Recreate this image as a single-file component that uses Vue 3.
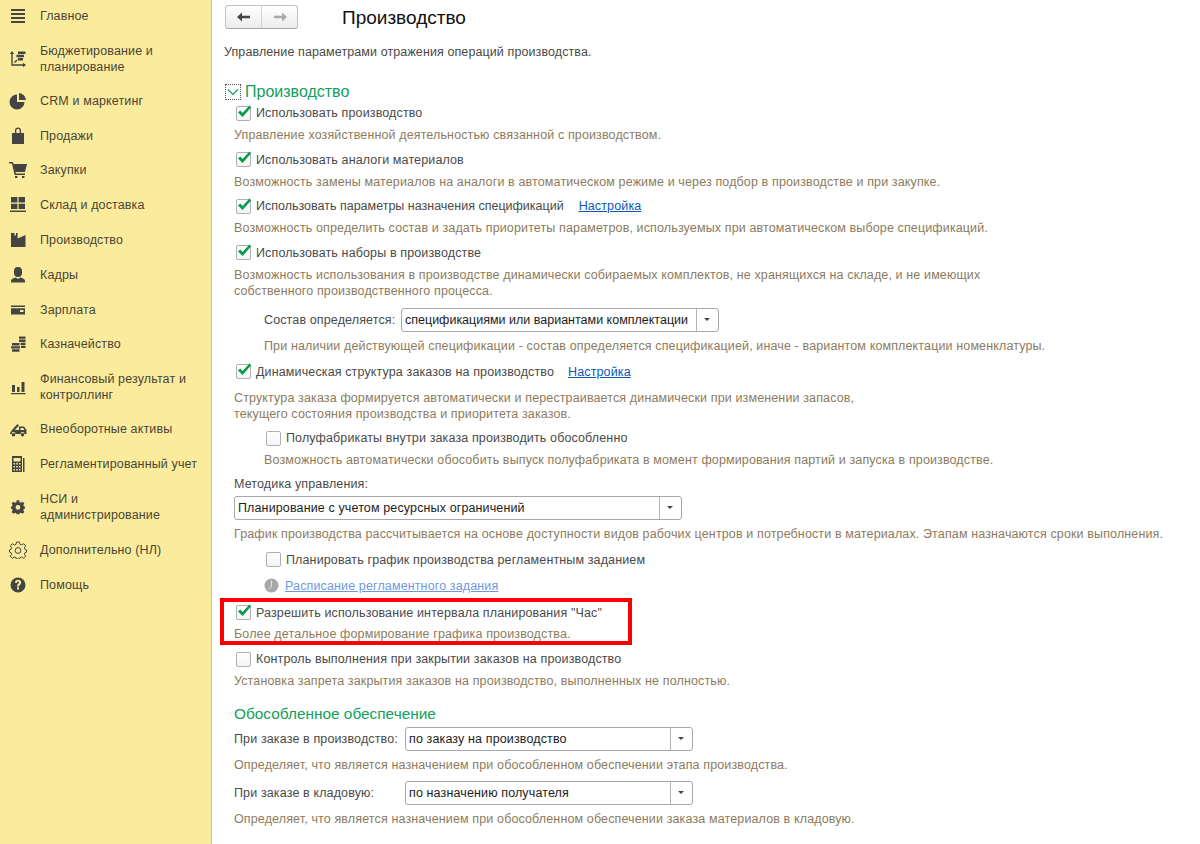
<template>
  <div class="page">
    <aside class="sidebar">
      <div class="nav-item" v-for="item in navItems" :key="item.title" :class="{ tall: item.tall }">
        <svg class="nav-icon" viewBox="0 0 18 18">
          <path :d="item.icon" :class="item.outline ? 'outline' : 'solid'" :transform="item.transform" />
        </svg>
        <span class="nav-title">{{ item.title }}</span>
      </div>
    </aside>

    <main class="content">
      <div class="header">
        <div class="nav-buttons">
          <button class="nav-btn">
            <svg width="16" height="12" viewBox="0 0 16 12"><path d="M1 6 6 1.5V4.8H14V7.2H6V10.5Z" fill="#444" /></svg>
          </button>
          <button class="nav-btn">
            <svg width="16" height="12" viewBox="0 0 16 12"><path d="M15 6 10 1.5V4.8H2V7.2H10V10.5Z" fill="#aaa" /></svg>
          </button>
        </div>
        <h1 class="title">Производство</h1>
      </div>

      <p class="lead">Управление параметрами отражения операций производства.</p>

      <div class="group-head">
        <span class="collapse">
          <svg width="12" height="8" viewBox="0 0 12 8"><path d="M1 1.5 6 6.5 11 1.5" fill="none" stroke="#1c9a5c" stroke-width="1.2" /></svg>
        </span>
        <span class="group-title">Производство</span>
      </div>

      <div class="body">
        <div class="opt">
          <div class="check-row">
            <span class="box"><svg v-bind="checkSvg"><path :d="checkPath" /></svg></span>
            <span>Использовать производство</span>
          </div>
          <div class="hint">Управление хозяйственной деятельностью связанной с производством.</div>
        </div>

        <div class="opt">
          <div class="check-row">
            <span class="box"><svg v-bind="checkSvg"><path :d="checkPath" /></svg></span>
            <span>Использовать аналоги материалов</span>
          </div>
          <div class="hint">Возможность замены материалов на аналоги в автоматическом режиме и через подбор в производстве и при закупке.</div>
        </div>

        <div class="opt">
          <div class="check-row">
            <span class="box"><svg v-bind="checkSvg"><path :d="checkPath" /></svg></span>
            <span class="tight">Использовать параметры назначения спецификаций</span>
            <a class="link">Настройка</a>
          </div>
          <div class="hint">Возможность определить состав и задать приоритеты параметров, используемых при автоматическом выборе спецификаций.</div>
        </div>

        <div class="opt">
          <div class="check-row">
            <span class="box"><svg v-bind="checkSvg"><path :d="checkPath" /></svg></span>
            <span>Использовать наборы в производстве</span>
          </div>
          <div class="hint">Возможность использования в производстве динамически собираемых комплектов, не хранящихся на складе, и не имеющих<br>собственного производственного процесса.</div>
        </div>

        <div class="opt nested compose">
          <div class="field-row">
            <label class="field-label compose-label">Состав определяется:</label>
            <div class="select compose-select">
              <span class="select-value tight">спецификациями или вариантами комплектации</span>
              <span class="select-btn"></span>
            </div>
          </div>
          <div class="hint field-hint">При наличии действующей спецификации - состав определяется спецификацией, иначе - вариантом комплектации номенклатуры.</div>
        </div>

        <div class="opt">
          <div class="check-row">
            <span class="box"><svg v-bind="checkSvg"><path :d="checkPath" /></svg></span>
            <span>Динамическая структура заказов на производство</span>
            <a class="link">Настройка</a>
          </div>
          <div class="hint dyn-hint">Структура заказа формируется автоматически и перестраивается динамически при изменении запасов,<br>текущего состояния производства и приоритета заказов.</div>
        </div>

        <div class="opt nested">
          <div class="check-row">
            <span class="box"></span>
            <span>Полуфабрикаты внутри заказа производить обособленно</span>
          </div>
          <div class="hint">Возможность автоматически обособить выпуск полуфабриката в момент формирования партий и запуска в производстве.</div>
        </div>

        <div class="opt method">
          <div class="method-label">Методика управления:</div>
          <div class="select method-select">
            <span class="select-value">Планирование с учетом ресурсных ограничений</span>
            <span class="select-btn"></span>
          </div>
          <div class="hint field-hint">График производства рассчитывается на основе доступности видов рабочих центров и потребности в материалах. Этапам назначаются сроки выполнения.</div>
        </div>

        <div class="opt nested plan">
          <div class="check-row">
            <span class="box"></span>
            <span>Планировать график производства регламентным заданием</span>
          </div>
          <div class="schedule">
            <svg class="clock" width="15" height="15" viewBox="0 0 15 15">
              <circle cx="7.5" cy="7.5" r="7" fill="#a9a9a9" />
              <path d="M7.5 2.5V8L5 11" fill="none" stroke="#e4e4e4" stroke-width="1" />
            </svg>
            <a class="link disabled">Расписание регламентного задания</a>
          </div>
        </div>

        <div class="opt marked">
          <div class="check-row">
            <span class="box"><svg v-bind="checkSvg"><path :d="checkPath" /></svg></span>
            <span>Разрешить использование интервала планирования "Час"</span>
          </div>
          <div class="hint">Более детальное формирование графика производства.</div>
          <div class="red-frame"></div>
        </div>

        <div class="opt">
          <div class="check-row">
            <span class="box"></span>
            <span>Контроль выполнения при закрытии заказов на производство</span>
          </div>
          <div class="hint">Установка запрета закрытия заказов на производство, выполненных не полностью.</div>
        </div>

        <h2 class="sub-title">Обособленное обеспечение</h2>

        <div class="opt order">
          <div class="field-row">
            <label class="field-label">При заказе в производство:</label>
            <div class="select order-select">
              <span class="select-value">по заказу на производство</span>
              <span class="select-btn"></span>
            </div>
          </div>
          <div class="hint field-hint">Определяет, что является назначением при обособленном обеспечении этапа производства.</div>
        </div>

        <div class="opt order">
          <div class="field-row">
            <label class="field-label">При заказе в кладовую:</label>
            <div class="select order-select">
              <span class="select-value">по назначению получателя</span>
              <span class="select-btn"></span>
            </div>
          </div>
          <div class="hint field-hint">Определяет, что является назначением при обособленном обеспечении заказа материалов в кладовую.</div>
        </div>
      </div>
    </main>
  </div>
</template>

<script setup>
const checkSvg = { class: 'tick', width: 16, height: 16, viewBox: '0 0 16 16' }
const checkPath = 'M2 8.5 4.2 6.4 6.6 9 13.4 1.4 15.2 3.2 6.6 13Z'

const gearPath = 'M7.5 1H10.5L11 3.4 12.6 4 14.6 2.7 16.7 4.8 15.4 6.8 16 8.4 17.5 8.9V11.1L16 11.6 15.4 13.2 16.7 15.2 14.6 17.3 12.6 16 11 16.6 10.5 18H7.5L7 16.6 5.4 16 3.4 17.3 1.3 15.2 2.6 13.2 2 11.6.5 11.1V8.9L2 8.4 2.6 6.8 1.3 4.8 3.4 2.7 5.4 4 7 3.4ZM9 6.6A2.9 2.9 0 1 0 9 12.4 2.9 2.9 0 0 0 9 6.6Z'

const navItems = [
  { title: 'Главное', icon: 'M2 2H16V4H2ZM2 6H16V8H2ZM2 10H16V12H2ZM2 14H16V16H2Z' },
  {
    title: 'Бюджетирование и планирование',
    tall: true,
    icon: 'M3 1 5.2 4H3.7V14.3H14V12.8L17 15 14 17.2V15.7H2.3V4H.8ZM9 1.5H16.5V4H9ZM7.5 4.8H15V7.2H7.5ZM9 8H14V10.4H9ZM5 12 7.5 9.5 8.6 10.6 6 13Z',
  },
  {
    title: 'CRM и маркетинг',
    icon: 'M8 2.5V10H15.5A7.5 7.5 0 1 1 8 2.5ZM10 1A7.5 7.5 0 0 1 17 8H10Z',
  },
  {
    title: 'Продажи',
    icon: 'M3 6H6V3.5A3 3 0 0 1 12 3.5V6H15V17H3ZM7.3 6H10.7V3.5A1.7 1.7 0 0 0 7.3 3.5Z',
  },
  {
    title: 'Закупки',
    icon: 'M0 1H4L4.6 3H18L16 11H6.5L6.9 12.5H16V14H5.6L3 2.5H0ZM6 15H8.4V17H6ZM13 15H15.4V17H13Z',
  },
  {
    title: 'Склад и доставка',
    icon: 'M2 1H8.4V6.6H2ZM9.6 1H16V6.6H9.6ZM2 7.8H8.4V13H2ZM9.6 7.8H16V13H9.6ZM1 14.6H17V16H1Z',
  },
  {
    title: 'Производство',
    icon: 'M2 2H5.5V4.5H7V2H8.6V7.5L16.5 4V16H2Z',
  },
  {
    title: 'Кадры',
    icon: 'M9 1A4 4 0 0 1 13 5V7A4 4 0 0 1 5 7V5A4 4 0 0 1 9 1ZM6.8 11.5 9 13 11.2 11.5C14 12 15.5 13 16 14.5V16.5H2V14.5C2.5 13 4 12 6.8 11.5Z',
  },
  {
    title: 'Зарплата',
    icon: 'M2 4.5H16V6H2ZM2 7.2H16V13.5H2ZM11 9V11H14.5V9Z',
  },
  {
    title: 'Казначейство',
    icon: 'M10 1.5H16.5V3.8H10ZM10 4.6H16.5V6.9H10ZM11.5 7.7H16.5V10H11.5ZM3 8H10.5V10.4H3ZM2 11.2H11V13.5H2ZM3 14.3H10.5V16.7H3ZM12 10.8H16.5V13H12Z',
  },
  {
    title: 'Финансовый результат и контроллинг',
    tall: true,
    icon: 'M3 7H6V14H3ZM8 9H10.5V14H8ZM12.5 4H15.5V14H12.5ZM2 15H16.5V16.2H2Z',
  },
  {
    title: 'Внеоборотные активы',
    icon: 'M1 13 3 10 8.5 4 10 5.5 5.8 10H10V6.5H15L17.5 10V14H15.5A2 2 0 0 0 11.5 14H6.5A2 2 0 0 0 2.5 14H1ZM11.5 8V10H15.5L14.2 8ZM4.5 13A1.8 1.8 0 1 1 4.5 16.6 1.8 1.8 0 0 1 4.5 13ZM13.5 13A1.8 1.8 0 1 1 13.5 16.6 1.8 1.8 0 0 1 13.5 13Z',
  },
  {
    title: 'Регламентированный учет',
    icon: 'M3 1H13V17H3ZM4.5 3V6.5H11.5V3ZM4.5 8V9.5H6V8ZM7.2 8V9.5H8.8V8ZM10 8V9.5H11.5V8ZM4.5 11V12.5H6V11ZM7.2 11V12.5H8.8V11ZM10 11V12.5H11.5V11ZM4.5 14V15.5H6V14ZM7.2 14V15.5H8.8V14ZM10 14V15.5H11.5V14ZM14 3H15.5V17H14Z',
  },
  {
    title: 'НСИ и администрирование',
    tall: true,
    transform: 'translate(1.5 1.4) scale(.83)',
    icon: gearPath,
  },
  {
    title: 'Дополнительно (НЛ)',
    outline: true,
    icon: gearPath,
  },
  {
    title: 'Помощь',
    icon: 'M9 1.5A7.5 7.5 0 1 1 9 16.5 7.5 7.5 0 0 1 9 1.5ZM6 7H8C8 6 8.4 5.6 9 5.6S10 6 10 6.6C10 7.6 8 8 8 10.4H10C10 8.8 12.2 8.4 12.2 6.4 12.2 4.8 11 3.8 9 3.8S6 5 6 7ZM8 11.3V13.4H10V11.3Z',
  },
]
</script>

<style>
html,
body {
  margin: 0;
  background: #fff;
}
</style>

<style scoped>
.page {
  display: flex;
  width: 1200px;
  height: 844px;
  overflow: hidden;
  font-family: "Liberation Sans", Arial, sans-serif;
  font-size: 12.5px;
  letter-spacing: 0.13px;
  color: #4a4a4a;
}

.sidebar {
  box-sizing: border-box;
  flex: 0 0 212px;
  background: #fbec9d;
  border-right: 1px solid #d4c57c;
}

.nav-item {
  display: flex;
  align-items: center;
  height: 34.8px;
  padding-left: 9px;
  box-sizing: border-box;
}

.nav-item:first-child {
  height: 31px;
}

.nav-item.tall {
  height: 50px;
}

.nav-item:nth-child(2) {
  height: 52.5px;
  padding-top: 2.5px;
}

.nav-item:nth-child(14) {
  margin-top: 1px;
}

.nav-icon {
  flex: 0 0 18px;
  width: 18px;
  height: 18px;
}

.solid {
  fill: #444;
}

.outline {
  fill: none;
  stroke: #444;
  stroke-width: 1;
}

.nav-title {
  margin-left: 13px;
  width: 160px;
  line-height: 16px;
  color: #4a4436;
}

.content {
  flex: 1;
  min-width: 0;
  padding-left: 12px;
}

.header {
  display: flex;
  align-items: center;
  height: 35px;
  padding-left: 1px;
}

.nav-buttons {
  display: flex;
  box-sizing: border-box;
  width: 73px;
  height: 24px;
  margin-top: -1px;
  border: 1px solid #c4c4c4;
  border-bottom-color: #a8a8a8;
  border-radius: 3px;
  background: linear-gradient(#ffffff, #ececec);
}

.nav-btn {
  flex: 1;
  display: flex;
  align-items: center;
  justify-content: center;
  padding: 0;
  background: none;
  border: 0;
}

.nav-btn + .nav-btn {
  border-left: 1px solid #d2d2d2;
}

.title {
  margin: 0 0 0 44px;
  font-size: 19px;
  font-weight: 400;
  letter-spacing: 0;
  color: #111;
}

.lead {
  margin: 9px 0 0;
  line-height: 16px;
  letter-spacing: 0.1px;
  color: #4a4a4a;
}

.group-head {
  display: flex;
  align-items: center;
  height: 20px;
  margin: 22px 0 0 1px;
}

.collapse {
  display: flex;
  align-items: center;
  justify-content: center;
  box-sizing: border-box;
  width: 16px;
  height: 16px;
  border: 1px dotted #555;
}

.group-title {
  margin-left: 4px;
  font-size: 16px;
  letter-spacing: 0;
  color: #12a05c;
}

.body {
  padding-left: 10px;
  margin-top: 1px;
}

.opt {
  position: relative;
  padding-bottom: 6.5px;
}

.nested {
  padding-left: 30px;
}

.compose {
  margin-top: 2.5px;
  padding-bottom: 8px;
}

.method {
  margin-top: 1px;
  padding-bottom: 8px;
}

.check-row {
  display: flex;
  align-items: center;
  height: 20px;
}

.tight {
  letter-spacing: 0;
}

.box {
  position: relative;
  flex: 0 0 15px;
  box-sizing: border-box;
  width: 15px;
  height: 15px;
  margin: 0 5px 0 2px;
  border: 1px solid #b0b0b0;
  border-radius: 2px;
  background: linear-gradient(#fff, #f4f4f4);
}

.tick {
  position: absolute;
  left: -1px;
  top: -3px;
  fill: #0a9a4c;
}

.link {
  margin-left: 14px;
  color: #0b56b8;
  text-decoration: underline;
}

.tight + .link {
  margin-left: 15px;
}

.link.disabled {
  margin-left: 6px;
  color: #6f98dc;
}

.hint {
  margin-top: 4px;
  line-height: 16px;
  color: #8c7b5e;
}

.field-hint {
  margin-top: 6px;
}

.dyn-hint {
  margin-top: 8px;
}

.marked .hint {
  margin-top: 3px;
}

.marked {
  padding-bottom: 7.5px;
}

.field-row {
  display: flex;
  align-items: center;
  height: 24px;
}

.field-label {
  flex: 0 0 171px;
}

.compose-label {
  flex-basis: 137px;
}

.select {
  display: flex;
  align-items: center;
  box-sizing: border-box;
  height: 24px;
  border: 1px solid #a8a8a8;
  border-radius: 3px;
  background: #fff;
}

.select-value {
  flex: 1;
  padding-left: 3px;
  color: #1c1c1c;
}

.select-btn {
  position: relative;
  flex: 0 0 21px;
  height: 100%;
  border-left: 1px solid #b4b4b4;
}

.select-btn::after {
  content: "";
  position: absolute;
  left: 7px;
  top: 9px;
  border: 3px solid transparent;
  border-top: 3px solid #444;
}

.compose-select {
  width: 318px;
}

.method-label {
  line-height: 16px;
  margin-bottom: 4px;
}

.method-select {
  width: 448px;
}

.order-select {
  width: 288px;
}

.order {
  padding-bottom: 8px;
}

.plan {
  padding-bottom: 7px;
}

.schedule {
  display: flex;
  align-items: center;
  height: 20px;
  margin-top: 6px;
}

.clock {
  flex: 0 0 15px;
}

.red-frame {
  position: absolute;
  left: -14px;
  top: -5px;
  box-sizing: border-box;
  width: 412px;
  height: 47px;
  border: 4px solid #f00;
  pointer-events: none;
}

.sub-title {
  margin: 8px 0 3px;
  font-size: 15.4px;
  font-weight: 400;
  letter-spacing: 0;
  line-height: 20px;
  color: #12a05c;
}
</style>
